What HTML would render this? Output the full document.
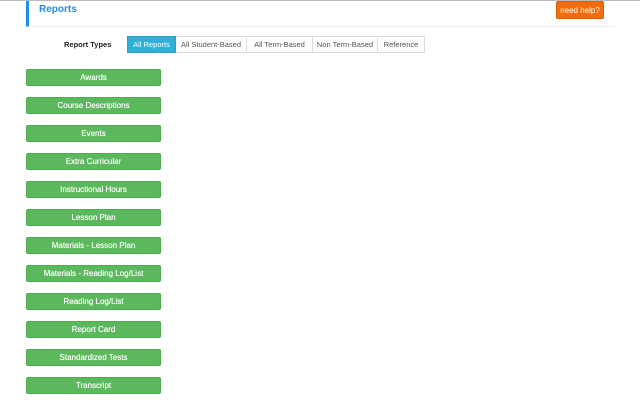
<!DOCTYPE html>
<html><head><style>
body{margin:0;width:640px;height:401px;background:#fff;font-family:"Liberation Sans",sans-serif;position:relative;overflow:hidden}
.top{position:absolute;left:0;top:0;width:640px;height:1px;background:#bbb}
.hdr{position:absolute;left:26px;top:1px;width:589px;height:26px;border-left:3px solid #1e90e8;border-bottom:1px solid #eee;box-sizing:border-box}
.hdr span{position:absolute;left:10px;top:3px;color:#2a8ae0;font-weight:bold;font-size:10px}
.help{position:absolute;left:556px;top:1px;width:48px;height:18px;background:#f26c0d;color:#fff;font-size:8px;text-align:center;line-height:18px;border-radius:2px;border:1px solid #d85f0a;box-sizing:border-box}
.lbl{position:absolute;left:64px;top:40px;font-size:7.5px;font-weight:bold;color:#222}
.tabs{position:absolute;left:127px;top:36px;height:17px;display:flex}
.tabs div{height:17px;box-sizing:border-box;border:1px solid #ddd;border-left:none;font-size:7.5px;color:#555;line-height:15px;text-align:center}
.tabs div.a{background:#31b0d5;color:#fff;border:1px solid #2aa0c5}
.b{position:absolute;left:26px;width:135px;height:17px;background:#5cb85c;border:1px solid #4cae4c;box-sizing:border-box;border-radius:2px;color:#fff;font-size:8px;text-align:center;line-height:15px;text-shadow:0 0 0.4px #fff}
</style></head><body>
<div class="top"></div>
<div class="hdr"><span>Reports</span></div>
<div class="help">need help?</div>
<div class="lbl">Report Types</div>
<div class="tabs"><div class="a" style="width:49px">All Reports</div><div style="width:71px">All Student-Based</div><div style="width:66px">All Term-Based</div><div style="width:65px">Non Term-Based</div><div style="width:47px">Reference</div></div>
<div class="b" style="top:69px">Awards</div>
<div class="b" style="top:97px">Course Descriptions</div>
<div class="b" style="top:125px">Events</div>
<div class="b" style="top:153px">Extra Curricular</div>
<div class="b" style="top:181px">Instructional Hours</div>
<div class="b" style="top:209px">Lesson Plan</div>
<div class="b" style="top:237px">Materials - Lesson Plan</div>
<div class="b" style="top:265px">Materials - Reading Log/List</div>
<div class="b" style="top:293px">Reading Log/List</div>
<div class="b" style="top:321px">Report Card</div>
<div class="b" style="top:349px">Standardized Tests</div>
<div class="b" style="top:377px">Transcript</div>
</body></html>
